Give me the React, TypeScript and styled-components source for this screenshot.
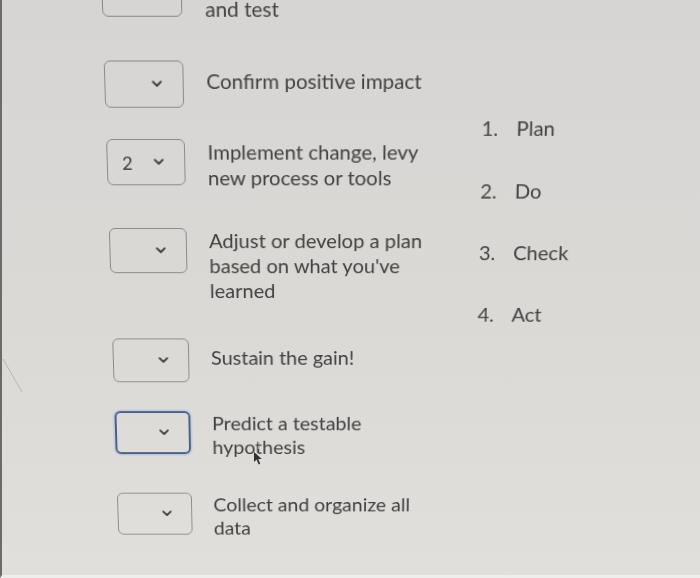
import React from "react";
import styled, { createGlobalStyle } from "styled-components";

const GlobalStyle = createGlobalStyle`
  html, body {
    margin: 0;
    padding: 0;
    background: #dad8d5;
    overflow: hidden;
  }
  * { box-sizing: border-box; }
`;

const Frame = styled.div`
  position: relative;
  width: 700px;
  height: 578px;
  overflow: hidden;
  background: linear-gradient(180deg, #d7d5d3 0%, #dbd9d6 55%, #e0dfdb 100%);
  border-left: 2px solid #6b6b6a;
  border-bottom: 3px solid #eeeeec;
  font-family: Lato, "Open Sans", sans-serif;
  color: #404042;
`;

const Stage = styled.div`
  display: flex;
  align-items: flex-start;
  width: 700px;
  padding-left: 109px;
  transform-origin: 327px 300px;
  transform: perspective(1000px) rotateX(-8deg);
`;

const QuestionList = styled.div`
  display: flex;
  flex-direction: column;
  gap: 30.2px;
  margin-top: -20px;
  width: 326px;
`;

const Row = styled.div`
  display: grid;
  grid-template-columns: 77px 1fr;
  column-gap: 22px;
  align-items: start;
`;

const SelectBox = styled.div<{ $focused?: boolean }>`
  display: flex;
  align-items: center;
  justify-content: flex-end;
  height: 45px;
  padding: 0 20px 0 14px;
  border-radius: 6px;
  border: ${(p) => (p.$focused ? "2.5px solid #47618e" : "1px solid #8d8c8b")};
  box-shadow: ${(p) => (p.$focused ? "0 0 0 1.5px rgba(150, 180, 220, 0.45)" : "none")};
`;

const Value = styled.span`
  margin-right: auto;
  font-size: 18px;
  color: #404040;
`;

const Label = styled.div`
  display: flex;
  align-items: center;
  min-height: 45px;
  padding-bottom: 6px;
  font-size: 20px;
  line-height: 25px;
  width: 225px;
`;

const Steps = styled.ol`
  list-style: none;
  margin: 117.5px 0 0 41px;
  padding: 0;
  display: flex;
  flex-direction: column;
  gap: 36.4px;
`;

const Step = styled.li`
  display: flex;
  font-size: 20px;
  line-height: 25px;
`;

const StepNum = styled.span`
  width: 34px;
  color: #444446;
`;

const Cursor = styled.svg`
  position: absolute;
  left: 251px;
  top: 451px;
`;

const Scratch = styled.svg`
  position: absolute;
  left: 0;
  top: 358px;
`;

const Chevron = () => (
  <svg width="10" height="7" viewBox="0 0 10 7" aria-hidden="true">
    <polyline
      points="1.2,1.3 5,5 8.8,1.3"
      fill="none"
      stroke="#464648"
      strokeWidth="2"
      strokeLinecap="round"
      strokeLinejoin="round"
    />
  </svg>
);

const questions: { text: string; value?: string; focused?: boolean }[] = [
  { text: "Carry out the experiment and\u00a0test" },
  { text: "Confirm positive impact" },
  { text: "Implement change, levy new process or tools", value: "2" },
  { text: "Adjust or develop a plan based on what you've learned" },
  { text: "Sustain the gain!" },
  { text: "Predict a testable hypothesis", focused: true },
  { text: "Collect and organize all data" },
];

const steps = ["Plan", "Do", "Check", "Act"];

export default function App() {
  return (
    <>
      <GlobalStyle />
      <Frame>
        <Stage>
          <QuestionList>
            {questions.map((q, i) => (
              <Row key={i}>
                <SelectBox $focused={q.focused}>
                  {q.value && <Value>{q.value}</Value>}
                  <Chevron />
                </SelectBox>
                <Label>
                  <span>{q.text}</span>
                </Label>
              </Row>
            ))}
          </QuestionList>
          <Steps>
            {steps.map((s, i) => (
              <Step key={s}>
                <StepNum>{i + 1}.</StepNum>
                <span>{s}</span>
              </Step>
            ))}
          </Steps>
        </Stage>
        <Scratch width="24" height="36" viewBox="0 0 24 36">
          <path d="M1 1 L20 34" stroke="#aaa9a6" strokeWidth="0.7" fill="none" />
        </Scratch>
        <Cursor width="10" height="15" viewBox="0 0 10 15">
          <path d="M1 1 L1 11 L3.6 8.6 L5.6 13.4 L7.2 12.7 L5.3 8 L8.8 8 Z" fill="#2f3033" />
        </Cursor>
      </Frame>
    </>
  );
}
